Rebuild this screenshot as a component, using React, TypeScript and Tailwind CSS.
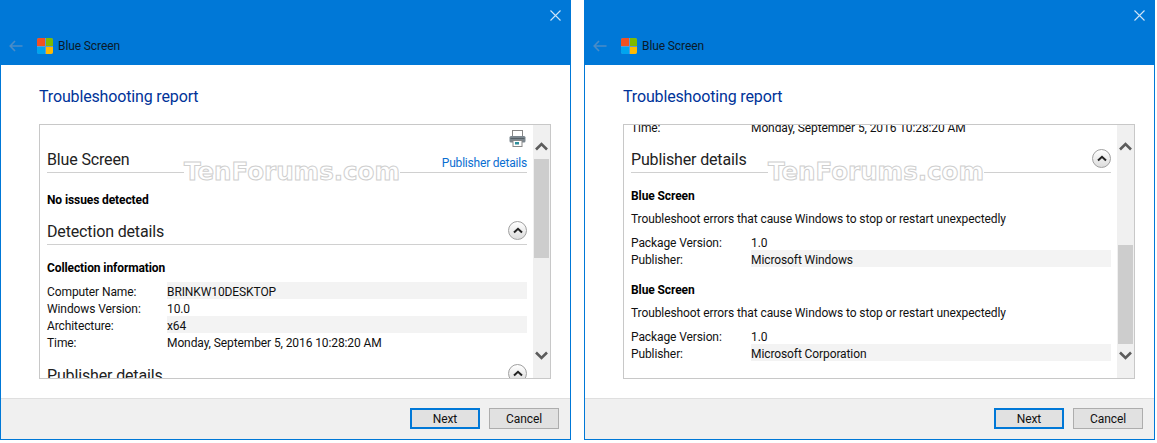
import type { ReactNode } from "react";

function Chevron({ down = false }: { down?: boolean }) {
  return (
    <svg width="13" height="9" viewBox="0 0 13 9" className={down ? "rotate-180" : ""}>
      <path d="M1 7.5 L6.5 2 L12 7.5" fill="none" stroke="#5c5c5c" strokeWidth="2.6" />
    </svg>
  );
}

function CollapseButton() {
  return (
    <div className="flex h-[19px] w-[19px] items-center justify-center rounded-full border border-[#a0a0a0] bg-gradient-to-b from-white to-[#dcdcdc]">
      <svg width="10" height="7" viewBox="0 0 10 7">
        <path d="M1 5.5 L5 1.8 L9 5.5" fill="none" stroke="#222" strokeWidth="2" />
      </svg>
    </div>
  );
}

function PrinterIcon() {
  return (
    <svg width="17" height="17" viewBox="0 0 17 17">
      <rect x="3.5" y="0.5" width="10" height="6" fill="#fff" stroke="#888" />
      <rect x="0.5" y="6" width="16" height="6.5" rx="1.5" fill="#7b868e" />
      <rect x="1.5" y="8" width="14" height="1" fill="#566066" />
      <rect x="4" y="10.5" width="9" height="6" fill="#fff" stroke="#888" />
      <rect x="6" y="12" width="4" height="2.5" fill="#2f8f9c" />
    </svg>
  );
}

function WinLogo() {
  return (
    <div className="grid h-[16px] w-[16px] grid-cols-2 gap-px rounded-[2px] bg-[#5a9ad8]">
      <div className="rounded-tl-[2px] bg-[#f25022]" />
      <div className="rounded-tr-[2px] bg-[#7fba00]" />
      <div className="rounded-bl-[2px] bg-[#00a4ef]" />
      <div className="rounded-br-[2px] bg-[#ffb900]" />
    </div>
  );
}

function InfoRow({ label, value, striped = false }: { label: string; value: string; striped?: boolean }) {
  return (
    <div className="flex h-[17px] text-[12px] leading-[20px] text-[#111]">
      <div className="w-[120px] shrink-0">{label}</div>
      <div className={`flex-1 ${striped ? "bg-[#f3f3f3]" : ""}`}>{value}</div>
    </div>
  );
}

function SectionHead({ title, right, className = "" }: { title: string; right?: ReactNode; className?: string }) {
  return (
    <div className={`flex h-[23px] items-start justify-between border-b border-[#d0d0d0] ${className}`}>
      <div className="text-[16px] leading-[20px] tracking-[-0.15px] text-[#222]">{title}</div>
      {right}
    </div>
  );
}

function Bold({ children, className = "" }: { children: ReactNode; className?: string }) {
  return <div className={`h-[17px] text-[12px] font-bold leading-[19px] text-black ${className}`}>{children}</div>;
}

function Window({ children, thumbTop }: { children: ReactNode; thumbTop: string }) {
  return (
    <div className="relative flex h-[440px] w-[571px] shrink-0 flex-col border border-[#0078d7] bg-white">
      <header className="relative h-[64px] shrink-0 bg-[#0078d7]">
        <svg width="11" height="11" viewBox="0 0 11 11" className="absolute right-[9px] top-[9px]">
          <path d="M0.5 0.5 L10.5 10.5 M10.5 0.5 L0.5 10.5" stroke="#cfe4f7" strokeWidth="1.1" />
        </svg>
        <div className="flex h-full items-end pb-[11px] pl-[8px]">
          <svg width="14" height="12" viewBox="0 0 14 12" className="mb-[2px]">
            <path d="M6 1 L1.2 6 L6 11 M1.2 6 H13.5" fill="none" stroke="#4a8cc7" strokeWidth="1.6" />
          </svg>
          <div className="ml-[14px]"><WinLogo /></div>
          <div className="ml-[5px] text-[12px] leading-[16px] text-[#0a1a2a]">Blue Screen</div>
        </div>
      </header>
      <main className="flex-1 pl-[38px] pr-[19px]">
        <h1 className="mt-[21px] h-[21px] text-[16px] leading-[22px] tracking-[-0.15px] text-[#003399]">Troubleshooting report</h1>
        <div className="mt-[17px] flex h-[255px] border border-[#c8c8c8]">
          <div className="flex-1 overflow-hidden pl-[7px] pr-[6px]">{children}</div>
          <div className="flex w-[17px] flex-col bg-[#f0f0f0]">
            <div className="flex h-[34px] shrink-0 items-end justify-center pb-[8px]"><Chevron /></div>
            <div className={`ml-[1px] h-[99px] w-[15px] bg-[#cdcdcd] ${thumbTop}`} />
            <div className="mt-auto flex h-[34px] shrink-0 items-start justify-center pt-[7px]"><Chevron down /></div>
          </div>
        </div>
      </main>
      <footer className="flex h-[41px] shrink-0 items-start justify-end gap-[9px] border-t border-[#dfdfdf] bg-[#f0f0f0] pr-[11px] pt-[9px]">
        <button className="h-[21px] w-[70px] border-2 border-[#0078d7] bg-[#e1e1e1] pt-[1px] text-[12px] leading-[16px] text-[#111]">Next</button>
        <button className="h-[21px] w-[70px] border border-[#adadad] bg-[#e1e1e1] pt-[1px] text-[12px] leading-[16px] text-[#111]">Cancel</button>
      </footer>
      <div className="absolute left-[183px] top-[158px] h-[26px] bg-white font-['DejaVu_Sans',sans-serif] text-[24.5px] font-bold leading-[26px] tracking-normal text-white [-webkit-text-stroke:1px_#cfcfcf]">
        TenForums.com
      </div>
    </div>
  );
}

export default function App() {
  return (
    <div className="flex h-[443px] w-[1157px] gap-[13px] overflow-hidden bg-white font-['Roboto',sans-serif] tracking-[-0.1px]">
      <Window thumbTop="mt-0">
        <div className="mt-[5px] flex h-[17px] justify-end pr-[1px]"><PrinterIcon /></div>
        <SectionHead
          className="mt-[3px]"
          title="Blue Screen"
          right={<span className="mt-[5px] text-[12px] leading-[17px] tracking-[-0.2px] text-[#0a6ed1]">Publisher details</span>}
        />
        <Bold className="mt-[18px]">No issues detected</Bold>
        <SectionHead className="mt-[14px]" title="Detection details" right={<div className="mt-[-1px]"><CollapseButton /></div>} />
        <Bold className="mt-[14px]">Collection information</Bold>
        <div className="mt-[6px]">
          <InfoRow striped label="Computer Name:" value="BRINKW10DESKTOP" />
          <InfoRow label="Windows Version:" value="10.0" />
          <InfoRow striped label="Architecture:" value="x64" />
          <InfoRow label="Time:" value="Monday, September 5, 2016 10:28:20 AM" />
        </div>
        <SectionHead className="mt-[16px]" title="Publisher details" right={<div className="mt-[-2px]"><CollapseButton /></div>} />
      </Window>
      <Window thumbTop="mt-[86px]">
        <div className="-mt-[7px]">
          <InfoRow label="Time:" value="Monday, September 5, 2016 10:28:20 AM" />
        </div>
        <SectionHead className="mt-[15px]" title="Publisher details" right={<div className="mt-[-1px]"><CollapseButton /></div>} />
        <Bold className="mt-[14px]">Blue Screen</Bold>
        <div className="mt-[6px] h-[17px] text-[12px] leading-[19px] text-[#111]">Troubleshoot errors that cause Windows to stop or restart unexpectedly</div>
        <div className="mt-[6px]">
          <InfoRow label="Package Version:" value="1.0" />
          <InfoRow striped label="Publisher:" value="Microsoft Windows" />
        </div>
        <Bold className="mt-[14px]">Blue Screen</Bold>
        <div className="mt-[6px] h-[17px] text-[12px] leading-[19px] text-[#111]">Troubleshoot errors that cause Windows to stop or restart unexpectedly</div>
        <div className="mt-[6px]">
          <InfoRow label="Package Version:" value="1.0" />
          <InfoRow striped label="Publisher:" value="Microsoft Corporation" />
        </div>
      </Window>
    </div>
  );
}
